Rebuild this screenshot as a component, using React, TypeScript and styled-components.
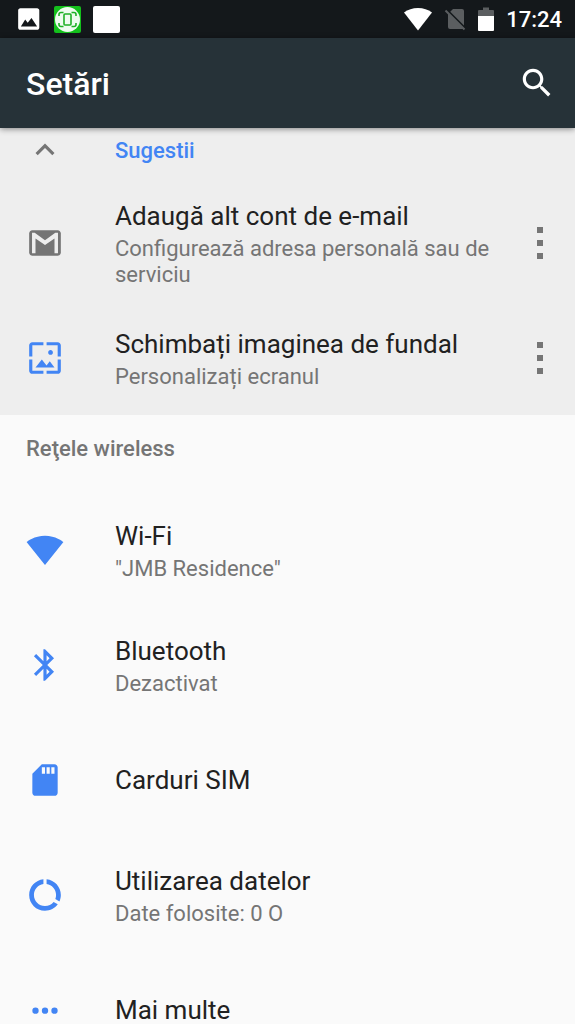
import React from 'react';
import styled, { createGlobalStyle } from 'styled-components';

const BLUE = '#4285f4';
const GREY = '#757575';

const GlobalStyle = createGlobalStyle`
  * { box-sizing: border-box; }
  body { margin: 0; background: #fafafa; font-family: Roboto, "Noto Sans", sans-serif; }
  button { font: inherit; color: inherit; background: none; border: 0; padding: 0; cursor: pointer; }
  ul { list-style: none; margin: 0; padding: 0; }
`;

const Screen = styled.div`
  display: flex;
  flex-direction: column;
  height: 100vh;
`;

const StatusBar = styled.div`
  flex: none;
  display: flex;
  align-items: center;
  justify-content: space-between;
  height: 38px;
  padding: 0 13px 0 16px;
  background: #14181b;
  color: #fff;
`;

const StatusGroup = styled.div`
  display: flex;
  align-items: center;
  gap: 12px;

  svg { display: block; }
`;

const Clock = styled.time`
  padding-top: 2px;
  font-size: 22px;
  line-height: 26px;
  font-weight: 500;
`;

const BlankIcon = styled.span`
  width: 27px;
  height: 27px;
  border-radius: 2px;
  background: #fff;
`;

const AppBar = styled.header`
  flex: none;
  position: relative;
  z-index: 1;
  display: flex;
  align-items: center;
  justify-content: space-between;
  height: 90px;
  padding: 0 19px 0 26px;
  background: #263238;
  color: #fff;
  box-shadow: 0 1px 6px rgba(0, 0, 0, 0.45);
`;

const PageTitle = styled.h1`
  margin: 0;
  padding-top: 2px;
  font-size: 32px;
  line-height: 38px;
  font-weight: 500;
`;

const IconButton = styled.button`
  flex: none;
  display: flex;
  align-items: center;
  justify-content: center;
  width: 38px;
  height: 38px;
`;

const Content = styled.main`
  flex: 1;
  min-height: 0;
  overflow-y: auto;
  scrollbar-width: none;
`;

const Suggestions = styled.section`
  background: #eee;
`;

const SuggestionsToggle = styled.button`
  display: flex;
  align-items: center;
  width: 100%;
  height: 57px;
  padding: 0 26px 12px;
  color: ${BLUE};
  font-size: 22px;
  line-height: 26px;
  font-weight: 500;
  text-align: left;
`;

const SectionTitle = styled.h2`
  margin: 0;
  padding: 21px 26px 30px;
  color: ${GREY};
  font-size: 22px;
  line-height: 26px;
  font-weight: 500;
`;

const Row = styled.li`
  display: flex;
  align-items: center;
  min-height: 115px;
  padding-right: 16px;
`;

const RowButton = styled.button`
  flex: 1;
  min-width: 0;
  display: flex;
  align-items: center;
  padding-left: 26px;
  text-align: left;
`;

const IconSlot = styled.span`
  flex: none;
  display: flex;
  width: 89px;

  svg { display: block; }
`;

const RowText = styled.span`
  flex: 1;
  min-width: 0;
  display: flex;
  flex-direction: column;
`;

const RowTitle = styled.span`
  color: #212121;
  font-size: 26px;
  line-height: 40px;
`;

const RowSummary = styled.span`
  padding-bottom: 2px;
  color: ${GREY};
  font-size: 22px;
  line-height: 26px;
`;

type GlyphProps = { size?: number; color?: string; children: React.ReactNode };

const Glyph = ({ size = 38, color = BLUE, children }: GlyphProps) => (
  <svg width={size} height={size} viewBox="0 0 24 24" fill={color} aria-hidden="true">
    {children}
  </svg>
);

const GmailGlyph = () => (
  <Glyph color={GREY}>
    <path d="M20 4H4c-1.100 0-2 .9-2 2v12c0 1.100.9 2 2 2h16c1.100 0 2-.9 2-2V6c0-1.100-.9-2-2-2z" />
    <path d="M3.800 18.400V5.600h1.700L12 10.200l6.500-4.600h1.700v12.800H18V9.100l-6 4.100-6-4.100v9.300z" fill="#eee" />
  </Glyph>
);

const WallpaperGlyph = () => (
  <Glyph>
    <path d="M4 4h7V2H4c-1.100 0-2 .9-2 2v7h2V4zm6 9l-4 5h12l-3-4-2.030 2.710L10 13zm7-4.500c0-.83-.67-1.500-1.500-1.500S14 7.670 14 8.500s.67 1.500 1.500 1.500S17 9.330 17 8.500zM20 2h-7v2h7v7h2V4c0-1.100-.9-2-2-2zm0 18h-7v2h7c1.100 0 2-.9 2-2v-7h-2v7zM4 13H2v7c0 1.100.9 2 2 2h7v-2H4v-7z" />
  </Glyph>
);

const WifiGlyph = () => (
  <Glyph>
    <path d="M12.010 21.490L23.640 7c-.45-.34-4.930-4-11.640-4C5.280 3 .81 6.660.36 7l11.630 14.490.01.010.01-.01z" />
  </Glyph>
);

const BluetoothGlyph = () => (
  <Glyph>
    <path d="M17.710 7.710L12 2h-1v7.590L6.410 5 5 6.410 10.590 12 5 17.590 6.410 19 11 14.410V22h1l5.710-5.710-4.300-4.290 4.300-4.290zM13 5.830l1.880 1.880L13 9.590V5.830zm1.880 10.460L13 18.170v-3.760l1.880 1.880z" />
  </Glyph>
);

const SimGlyph = () => (
  <Glyph>
    <path d="M18 2h-8L4.020 8 4 20c0 1.100.9 2 2 2h12c1.100 0 2-.9 2-2V4c0-1.100-.9-2-2-2zm-6 6h-2V4h2v4zm3 0h-2V4h2v4zm3 0h-2V4h2v4z" />
  </Glyph>
);

const DataGlyph = () => (
  <Glyph>
    <path d="M13 2.050v3.030c3.390.49 6 3.390 6 6.920 0 .9-.18 1.750-.48 2.540l2.600 1.530c.56-1.240.88-2.620.88-4.070 0-5.180-3.950-9.450-9-9.950zM12 19c-3.870 0-7-3.130-7-7 0-3.530 2.610-6.430 6-6.920V2.050c-5.060.5-9 4.760-9 9.950 0 5.520 4.470 10 9.990 10 3.310 0 6.240-1.610 8.060-4.090l-2.600-1.530C16.170 17.980 14.210 19 12 19z" />
  </Glyph>
);

const MoreGlyph = () => (
  <Glyph>
    <circle cx="6" cy="12.400" r="2" />
    <circle cx="12" cy="12.400" r="2" />
    <circle cx="18" cy="12.400" r="2" />
  </Glyph>
);

const OverflowGlyph = () => (
  <svg width="6" height="32" viewBox="0 0 6 32" fill={GREY} aria-hidden="true">
    <rect y="0" width="6" height="6" />
    <rect y="13" width="6" height="6" />
    <rect y="26" width="6" height="6" />
  </svg>
);

type Item = { title: string; summary?: string; icon: React.ReactNode };

const suggestions: Item[] = [
  { title: 'Adaugă alt cont de e-mail', summary: 'Configurează adresa personală sau de serviciu', icon: <GmailGlyph /> },
  { title: 'Schimbați imaginea de fundal', summary: 'Personalizați ecranul', icon: <WallpaperGlyph /> },
];

const wireless: Item[] = [
  { title: 'Wi-Fi', summary: '"JMB Residence"', icon: <WifiGlyph /> },
  { title: 'Bluetooth', summary: 'Dezactivat', icon: <BluetoothGlyph /> },
  { title: 'Carduri SIM', icon: <SimGlyph /> },
  { title: 'Utilizarea datelor', summary: 'Date folosite: 0 O', icon: <DataGlyph /> },
  { title: 'Mai multe', icon: <MoreGlyph /> },
];

const SettingRow = ({ item, menu }: { item: Item; menu?: boolean }) => (
  <Row>
    <RowButton type="button">
      <IconSlot>{item.icon}</IconSlot>
      <RowText>
        <RowTitle>{item.title}</RowTitle>
        {item.summary && <RowSummary>{item.summary}</RowSummary>}
      </RowText>
    </RowButton>
    {menu && (
      <IconButton type="button" aria-label="Mai multe opțiuni">
        <OverflowGlyph />
      </IconButton>
    )}
  </Row>
);

export default function App() {
  return (
    <Screen>
      <GlobalStyle />
      <StatusBar>
        <StatusGroup>
          <Glyph size={26} color="#fff">
            <path d="M21.500 20V4c0-1.100-.9-2-2-2H4c-1.100 0-2 .9-2 2v16c0 1.100.9 2 2 2h15.500c1.100 0 2-.9 2-2zM8.500 12.500l2.300 3 3.500-4.500 5.200 8H4.500z" />
          </Glyph>
          <svg width="27" height="27" viewBox="0 0 27 27" fill="none" aria-hidden="true">
            <rect width="27" height="27" rx="2" fill="#14c01c" />
            <circle cx="13.500" cy="13.500" r="12.500" fill="#effbef" />
            <g stroke="#1fb026" strokeWidth="1.600">
              <rect x="10" y="8" width="7" height="11" rx="1" />
              <path d="M9.500 6.500H7A2 2 0 0 0 5 8.500V10M17.500 6.500H20A2 2 0 0 1 22 8.500V10M5 17v1.500a2 2 0 0 0 2 2h2.500M22 17v1.500a2 2 0 0 1-2 2h-2.500" />
            </g>
          </svg>
          <BlankIcon />
        </StatusGroup>
        <StatusGroup>
          <svg width="28" height="24" viewBox="0 0 28 24" fill="#fff" aria-hidden="true">
            <path d="M14 23.500L28 5.500C24 2.500 19.500 1 14 1S4 2.500 0 5.500z" />
          </svg>
          <svg width="22" height="24" viewBox="0 0 22 24" aria-hidden="true">
            <path d="M9 2h9a2 2 0 0 1 2 2v16a2 2 0 0 1-2 2H6a2 2 0 0 1-2-2V7z" fill="#5b5e60" />
            <path d="M3.500 3.500L21.500 21.500" stroke="#14181b" strokeWidth="2.200" />
            <path d="M1.500 3.500L20.500 22.500" stroke="#5b5e60" strokeWidth="2" />
          </svg>
          <svg width="16" height="24" viewBox="0 0 16 24" aria-hidden="true">
            <path d="M5 0.500h6v2.500h4a1 1 0 0 1 1 1V9H0V4a1 1 0 0 1 1-1h4z" fill="#5b5e60" />
            <path d="M0 9h16v14a1 1 0 0 1-1 1H1a1 1 0 0 1-1-1z" fill="#fff" />
          </svg>
          <Clock>17:24</Clock>
        </StatusGroup>
      </StatusBar>
      <AppBar>
        <PageTitle>Setări</PageTitle>
        <IconButton type="button" aria-label="Căutați">
          <Glyph color="#fff">
            <path d="M15.500 14h-.79l-.28-.27C15.410 12.590 16 11.110 16 9.500 16 5.910 13.090 3 9.500 3S3 5.910 3 9.500 5.910 16 9.500 16c1.610 0 3.090-.59 4.230-1.570l.27.28v.79l5 4.990L20.490 19l-4.990-5zm-6 0C7.010 14 5 11.990 5 9.500S7.010 5 9.500 5 14 7.010 14 9.500 11.990 14 9.500 14z" />
          </Glyph>
        </IconButton>
      </AppBar>
      <Content>
        <Suggestions>
          <SuggestionsToggle type="button" aria-expanded="true">
            <IconSlot>
              <Glyph color={GREY}>
                <path d="M12 7.200l-6 6 1.410 1.410L12 10.030l4.590 4.580L18 13.200z" />
              </Glyph>
            </IconSlot>
            Sugestii
          </SuggestionsToggle>
          <ul>
            {suggestions.map((item) => (
              <SettingRow key={item.title} item={item} menu />
            ))}
          </ul>
        </Suggestions>
        <section>
          <SectionTitle>Reţele wireless</SectionTitle>
          <ul>
            {wireless.map((item) => (
              <SettingRow key={item.title} item={item} />
            ))}
          </ul>
        </section>
      </Content>
    </Screen>
  );
}
